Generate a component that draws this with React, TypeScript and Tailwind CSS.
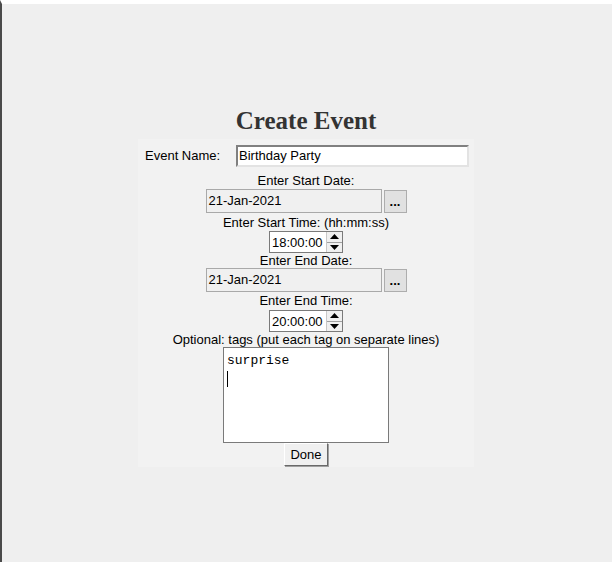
import React from "react";

const Spinner = ({ value }: { value: string }) => (
  <div className="flex h-[22px] w-[74px] border border-[#7a7a7a] bg-white">
    <div className="flex flex-1 items-center pl-[2px] text-[13px] leading-none text-black">{value}</div>
    <div className="flex w-[16px] flex-col border-l border-[#c8c8c8] bg-[#f0f0f0]">
      <div className="flex flex-1 items-center justify-center border-b border-[#a0a0a0]">
        <svg width="9" height="5" viewBox="0 0 9 5">
          <path d="M0 5 L4.5 0 L9 5 Z" fill="#000" />
        </svg>
      </div>
      <div className="flex flex-1 items-center justify-center">
        <svg width="9" height="5" viewBox="0 0 9 5">
          <path d="M0 0 L4.5 5 L9 0 Z" fill="#000" />
        </svg>
      </div>
    </div>
  </div>
);

const DateRow = ({ value }: { value: string }) => (
  <div className="flex h-[24px] items-center gap-[2px]">
    <div className="flex h-[24px] w-[176px] items-center border border-[#a9a9a9] bg-[#f0f0f0] pl-[2px] text-[13px] text-black">
      {value}
    </div>
    <button className="flex h-[23px] w-[23px] items-center justify-center border border-[#adadad] bg-[#e1e1e1] pt-[2px] text-[13px] font-bold text-black">
      ...
    </button>
  </div>
);

const Label = ({ children }: { children: React.ReactNode }) => (
  <div className="h-[15px] whitespace-nowrap text-center text-[13px] leading-[15px] text-black">{children}</div>
);

const App = () => {
  return (
    <div
      className="h-[562px] w-full border-l-2 border-t-4 border-l-[#4a4a4a] border-t-white bg-[#efefef]"
      style={{ fontFamily: '"Liberation Sans", Arial, sans-serif' }}
    >
      <div className="mr-[2px] flex flex-col items-center pt-[102px]">
        <h1
          className="h-[30px] text-[25px] font-bold leading-[30px] text-[#333333]"
          style={{ fontFamily: '"Liberation Serif", "Times New Roman", serif' }}
        >
          Create Event
        </h1>
        <div className="mt-[3px] flex w-[336px] flex-col items-center bg-[#f2f2f2] pt-[6px] pb-[1px]">
          <div className="flex h-[22px] w-full items-center pl-[7px]">
            <span className="w-[91px] text-[13px] text-black">Event Name:</span>
            <div className="flex h-[22px] w-[233px] items-center border-2 border-t-[#808080] border-l-[#808080] border-r-[#e3e3e3] border-b-[#e3e3e3] bg-white pl-[1px] text-[13px] text-black">
              Birthday Party
            </div>
          </div>
          <div className="mt-[6px]">
            <Label>Enter Start Date:</Label>
          </div>
          <div className="mt-[1px]">
            <DateRow value="21-Jan-2021" />
          </div>
          <div className="mt-[2px]">
            <Label>Enter Start Time: (hh:mm:ss)</Label>
          </div>
          <div className="mt-[1px]">
            <Spinner value="18:00:00" />
          </div>
          <Label>Enter End Date:</Label>
          <DateRow value="21-Jan-2021" />
          <div className="mt-[1px]">
            <Label>Enter End Time:</Label>
          </div>
          <div className="mt-[2px]">
            <Spinner value="20:00:00" />
          </div>
          <Label>Optional: tags (put each tag on separate lines)</Label>
          <div className="flex h-[96px] w-[166px] flex-col border border-[#7a7a7a] bg-white pl-[3px] pt-[5px]">
            <span
              className="text-[13px] leading-[15px] text-black"
              style={{ fontFamily: '"Liberation Mono", "Courier New", monospace' }}
            >
              surprise
            </span>
            <span className="mt-[3px] block h-[16px] w-[1px] bg-black" />
          </div>
          <button className="flex h-[23px] w-[44px] items-center justify-center border border-t-white border-l-white border-r-[#696969] border-b-[#696969] bg-[#f0f0f0] text-[13px] text-black shadow-[1px_1px_0_#a0a0a0]">
            Done
          </button>
        </div>
      </div>
    </div>
  );
};

export default App;
